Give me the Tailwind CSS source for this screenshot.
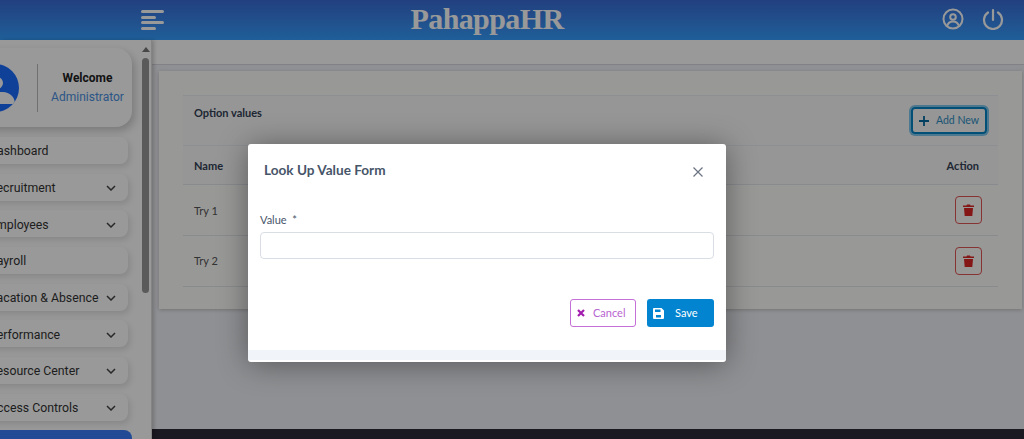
<!DOCTYPE html>
<html><head><meta charset="utf-8">
<script src="https://cdn.jsdelivr.net/npm/@tailwindcss/browser@4"></script></head>
<body class="w-[1024px] h-[439px] overflow-hidden relative bg-[#eff0f5] font-['Lato',sans-serif]">
<header class="h-10 bg-gradient-to-b from-[#396bd4] to-[#349eff] flex items-center relative">
  <div class="ml-[141px] w-[23px] flex flex-col gap-[2.500px]">
    <span class="block h-[3px] w-[23px] rounded bg-white"></span>
    <span class="block h-[3px] w-[15px] rounded bg-white"></span>
    <span class="block h-[3px] w-[23px] rounded bg-white"></span>
    <span class="block h-[3px] w-[15px] rounded bg-white"></span>
  </div>
  <div class="ml-[246px] w-[154px] text-center font-['Liberation_Serif',serif] font-bold text-[30px] leading-none text-white tracking-[-0.600px] whitespace-nowrap mt-[-3px]">PahappaHR</div>
  <svg class="ml-auto mr-[18px] mt-[-3px]" width="22" height="22" viewBox="0 0 22 22" fill="none" stroke="#fff" stroke-width="2"><circle cx="11" cy="11" r="9.500"/><circle cx="11" cy="9" r="2.800"/><path d="M5 18c1-3 3-4.500 6-4.500s5 1.500 6 4.500"/></svg>
  <svg class="mr-[20px] mt-[-3px]" width="22" height="22" viewBox="0 0 22 22" fill="none" stroke="#fff" stroke-width="2.200" stroke-linecap="round"><path d="M11 2v10"/><path d="M6 4.500a9 9 0 1 0 10 0"/></svg>
</header>
<div class="flex h-[399px]">
  <aside class="w-[152px] shrink-0 bg-white shadow-[2px_0_4px_rgba(0,0,0,0.2)] overflow-hidden flex relative z-10 border-r border-[#ddd]">
    <div class="w-[132px] shrink-0 pt-2">
      <div class="ml-[-30px] w-[162px] h-[79px] rounded-2xl bg-white shadow-[3px_4px_8px_rgba(0,0,0,0.2)] flex items-center">
        <div class="ml-[1px] w-12 h-12 rounded-full bg-[#1a6dff] shrink-0 relative overflow-hidden">
          <div class="absolute left-[20px] top-[13px] w-[12px] h-[12px] rounded-full bg-white"></div>
          <div class="absolute left-[16px] top-[28px] w-[28px] h-[12px] rounded-t-full bg-white"></div>
        </div>
        <div class="ml-[18px] w-px h-12 bg-[#bbb]"></div>
        <div class="ml-[13px] w-[73px] text-center font-['Roboto',sans-serif] text-[12px] leading-[19px]">
          <div class="font-bold text-[#222]">Welcome</div>
          <div class="text-[#4a90e2] text-[12px] whitespace-nowrap">Administrator</div>
        </div>
      </div>
      <nav class="mt-[10px] ml-[-30px] w-[158px] flex flex-col gap-[9.670px] font-['Roboto',sans-serif] text-[12.300px] text-[#333]">
        <div class="h-[27px] rounded-lg bg-white shadow-[2px_3px_6px_rgba(0,0,0,0.12)] flex items-center pl-[19px] pr-[12px] pt-[2px]">Dashboard</div>
        <div class="h-[27px] rounded-lg bg-white shadow-[2px_3px_6px_rgba(0,0,0,0.12)] flex items-center justify-between pl-[19px] pr-[12px] pt-[2px]">Recruitment<svg width="10" height="6" viewBox="0 0 10 6" fill="none" stroke="#444" stroke-width="1.500"><path d="M1 1l4 4 4-4"/></svg></div>
        <div class="h-[27px] rounded-lg bg-white shadow-[2px_3px_6px_rgba(0,0,0,0.12)] flex items-center justify-between pl-[19px] pr-[12px] pt-[2px]">Employees<svg width="10" height="6" viewBox="0 0 10 6" fill="none" stroke="#444" stroke-width="1.500"><path d="M1 1l4 4 4-4"/></svg></div>
        <div class="h-[27px] rounded-lg bg-white shadow-[2px_3px_6px_rgba(0,0,0,0.12)] flex items-center pl-[19px] pr-[12px] pt-[2px]">Payroll</div>
        <div class="h-[27px] rounded-lg bg-white shadow-[2px_3px_6px_rgba(0,0,0,0.12)] flex items-center justify-between pl-[19px] pr-[12px] pt-[2px] whitespace-nowrap">Vacation &amp; Absence<svg width="10" height="6" viewBox="0 0 10 6" fill="none" stroke="#444" stroke-width="1.500"><path d="M1 1l4 4 4-4"/></svg></div>
        <div class="h-[27px] rounded-lg bg-white shadow-[2px_3px_6px_rgba(0,0,0,0.12)] flex items-center justify-between pl-[19px] pr-[12px] pt-[2px]">Performance<svg width="10" height="6" viewBox="0 0 10 6" fill="none" stroke="#444" stroke-width="1.500"><path d="M1 1l4 4 4-4"/></svg></div>
        <div class="h-[27px] rounded-lg bg-white shadow-[2px_3px_6px_rgba(0,0,0,0.12)] flex items-center justify-between pl-[19px] pr-[12px] pt-[2px] whitespace-nowrap">Resource Center<svg width="10" height="6" viewBox="0 0 10 6" fill="none" stroke="#444" stroke-width="1.500"><path d="M1 1l4 4 4-4"/></svg></div>
        <div class="h-[27px] rounded-lg bg-white shadow-[2px_3px_6px_rgba(0,0,0,0.12)] flex items-center justify-between pl-[19px] pr-[12px] pt-[2px] whitespace-nowrap">Access Controls<svg width="10" height="6" viewBox="0 0 10 6" fill="none" stroke="#444" stroke-width="1.500"><path d="M1 1l4 4 4-4"/></svg></div>
        <div class="h-[27px] w-[162px] rounded-lg bg-[#3a7cf8]"></div>
      </nav>
    </div>
    <div class="ml-[9px] w-[9px] shrink-0 flex flex-col items-center pt-[7px]">
      <svg width="8" height="5" viewBox="0 0 8 5" fill="#777"><path d="M4 0l4 5H0z"/></svg>
      <div class="mt-[6px] w-[7px] h-[235px] rounded bg-[#969696]"></div>
    </div>
  </aside>
  <main class="flex-1 min-w-0 flex flex-col">
    <div class="h-[25px] shrink-0 bg-white border-b border-[#d8d8e0]"></div>
    <div class="flex-1 pt-[6px] pl-[7px] pr-[2px] relative">
      <section class="h-[238px] bg-[#fefefc] shadow-[0_1px_4px_rgba(0,0,0,0.2)] pt-[24px] pl-[24px] pr-[24px]">
        <div class="text-[#334155] text-[11px]">
          <div class="h-[51px] border-y border-[#eceff3] bg-[#fafafa] flex items-center justify-between pl-[11px] pr-[10px]">
            <span class="font-bold mb-[14px]">Option values</span>
            <button class="h-[27px] w-[76px] mr-[1px] rounded border-2 border-[#0284c7] ring-2 ring-[#7dc6ee] text-[#2d8ec4] text-[10.500px] flex items-center justify-center gap-[7px]">
              <svg width="10" height="10" viewBox="0 0 10 10" stroke="#0369a1" stroke-width="1.800"><path d="M5 0v10M0 5h10"/></svg>Add New</button>
          </div>
          <div class="h-[39px] border-b border-[#e5e7eb] bg-[#fafafa] flex items-center justify-between pl-[11px] pr-[19px] font-bold"><span class="mt-[3px]">Name</span><span class="mt-[3px]">Action</span></div>
          <div class="h-[51px] border-b border-[#e5e7eb] flex items-center justify-between pl-[11px] pr-[16px] text-[#555]"><span class="mt-[3px]">Try 1</span>
            <button class="w-[27px] h-[28px] rounded border border-[#e25555] flex items-center justify-center"><svg width="11" height="12" viewBox="0 0 11 12" fill="#dc2626"><path d="M0 1.500h3.500L4 .5h3l.5 1H11V3H0zM1 4h9l-.7 8H1.700z"/></svg></button></div>
          <div class="h-[51px] border-b border-[#e5e7eb] flex items-center justify-between pl-[11px] pr-[16px] text-[#555]"><span class="mt-[1px]">Try 2</span>
            <button class="w-[27px] h-[28px] rounded border border-[#e25555] flex items-center justify-center"><svg width="11" height="12" viewBox="0 0 11 12" fill="#dc2626"><path d="M0 1.500h3.500L4 .5h3l.5 1H11V3H0zM1 4h9l-.7 8H1.700z"/></svg></button></div>
        </div>
      </section>
      <div class="absolute left-0 right-0 bottom-0 h-[10.500px] bg-[#2c2836]"></div>
    </div>
  </main>
</div>
<div class="absolute inset-0 z-20 bg-black/40"></div>
<div class="absolute z-30 left-[248px] top-[144px] w-[478px] h-[218px] bg-white rounded-[3px] shadow-[0_2px_30px_rgba(0,0,0,0.4)] flex flex-col">
  <div class="h-[52px] shrink-0 flex items-center justify-between pl-[16px] pr-[22px]">
    <h2 class="text-[13.600px] font-bold text-[#475569] mt-[0px]">Look Up Value Form</h2>
    <svg class="mt-[3px]" width="12" height="12" viewBox="0 0 12 12" stroke="#6b7280" stroke-width="1.200"><path d="M1.500 1.500l9 9M10.500 1.500l-9 9"/></svg>
  </div>
  <div class="px-[12px] pt-[17px] flex-1">
    <div class="text-[11px] text-[#475569] leading-[14px]">Value&nbsp; *</div>
    <div class="mt-[5px] h-[27px] rounded border border-[#d9dee5]"></div>
    <div class="mt-[40px] flex justify-end gap-[11px]">
      <button class="w-[66px] h-[28px] rounded-[3px] border border-[#c56fd8] text-[#b865d0] text-[11px] flex items-center pl-[6px] gap-[8px]"><svg width="8" height="8" viewBox="0 0 8 8" stroke="#a21caf" stroke-width="2.200"><path d="M1 1l6 6M7 1L1 7"/></svg>Cancel</button>
      <button class="w-[67px] h-[28px] rounded-[3px] bg-[#0284d0] text-white text-[11px] flex items-center pl-[6px] gap-[11px]"><svg width="11" height="11" viewBox="0 0 11 11" fill="#fff"><path fill-rule="evenodd" d="M0 1a1 1 0 0 1 1-1h7.500L11 2.500V10a1 1 0 0 1-1 1H1a1 1 0 0 1-1-1zm2 .5V4h5.500V1.500zM3 7v2.500h5V7z"/></svg>Save</button>
    </div>
  </div>
  <div class="h-[10px] shrink-0 mb-[2px] bg-[#f1f5f9]"></div>
</div>
</body></html>
